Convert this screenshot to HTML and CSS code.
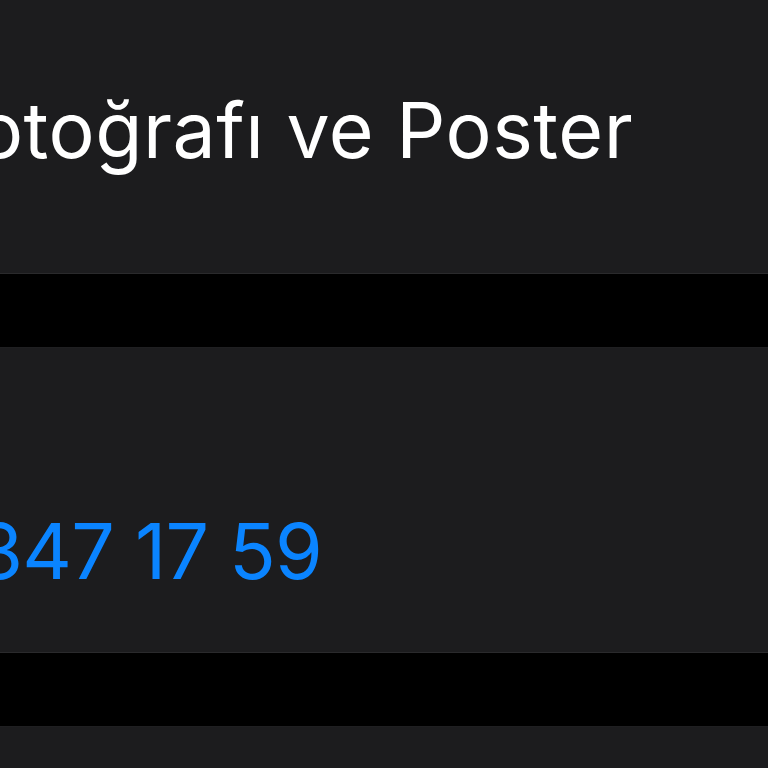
FILE: index.html
```html
<!DOCTYPE html>
<html lang="tr">
<head>
    <meta charset="UTF-8">
    <meta name="viewport" content="width=device-width, initial-scale=1.0">
    <title>Kişi</title>
    <link rel="stylesheet" href="styles.css">
</head>
<body>

    <div class="screen">
        <div class="cell cell-poster">
            <span class="cell-text">Fotoğrafı ve Poster</span>
        </div>

        <div class="gap"></div>

        <div class="cell cell-phone">
            <span class="cell-text phone">0532 347 17 59</span>
        </div>

        <div class="gap"></div>

        <div class="cell cell-rest"></div>
    </div>

</body>
</html>
```

FILE: styles.css
```css
* {
    margin: 0;
    padding: 0;
    box-sizing: border-box;
}

body {
    background-color: #000;
    font-family: Inter, "Noto Sans", sans-serif;
    width: 768px;
    height: 768px;
    overflow: hidden;
}

.screen {
    display: flex;
    flex-direction: column;
    height: 768px;
}

.cell {
    background-color: #1c1c1e;
    overflow: hidden;
    white-space: nowrap;
    display: flex;
}

.cell-text {
    font-size: 77px;
    line-height: 1;
    letter-spacing: 0.5px;
    margin-left: -66px;
    color: #fff;
}

.cell-poster {
    height: 273px;
    padding-top: 92px;
}

.cell-phone {
    height: 304px;
    padding-top: 165px;
}

.phone {
    color: #0a84ff;
    letter-spacing: -0.8px;
    margin-left: -232px;
}

.cell-rest {
    flex: 1;
}

.gap {
    height: 75px;
    background-color: #000;
    border-top: 1px solid #2a2a2c;
    border-bottom: 1px solid #1f1f21;
}
```
